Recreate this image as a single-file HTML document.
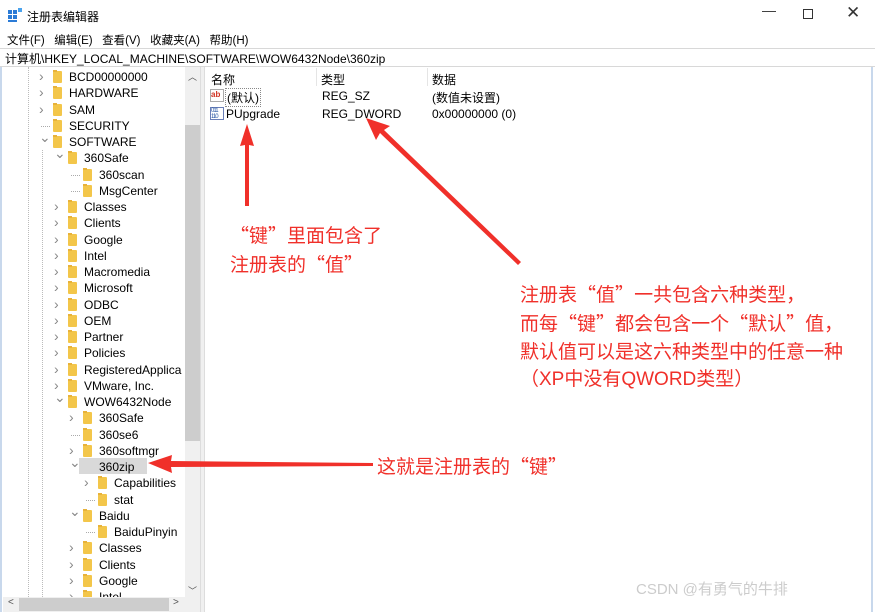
<!DOCTYPE html>
<html><head><meta charset="utf-8"><style>
*{margin:0;padding:0;box-sizing:border-box}
body{width:875px;height:612px;overflow:hidden;background:#fff;font-family:"Liberation Sans","Noto Sans CJK SC",sans-serif;font-size:12px;color:#000;position:relative}
.a{position:absolute;white-space:nowrap}
.row{position:absolute;height:16px;line-height:16px;font-size:12px}
.fd{position:absolute;width:9px;height:12px;background:#f3c64a;border-radius:1px;top:2px}
.fd:before{content:"";position:absolute;left:0;top:-1px;width:4px;height:2px;background:#e8b23a}
.ch{position:absolute;top:0;color:#888;font-size:10px}
.red{color:#f0302a;font-size:19px;font-family:"Liberation Sans","Noto Sans CJK SC",sans-serif}
.q{font-family:"Noto Sans CJK SC",sans-serif}
</style></head><body>
<div class="a" style="left:0;top:0;width:875px;height:30px;background:#fff"></div>
<svg class="a" style="left:8px;top:8px" width="14" height="14"><rect x="0" y="2" width="4" height="4" fill="#2b7bd6"/><rect x="5" y="2" width="4" height="4" fill="#2b7bd6"/><rect x="0" y="7" width="4" height="4" fill="#2b7bd6"/><rect x="5" y="7" width="4" height="4" fill="#2b7bd6"/><rect x="0" y="12" width="9" height="2" fill="#2b7bd6"/><rect x="10" y="0" width="4" height="4" fill="#4aa3ee"/></svg>
<div class="a" style="left:27px;top:8px;font-size:12px">注册表编辑器</div>
<div class="a" style="left:762px;top:2px;font-size:14px;color:#333">—</div>
<div class="a" style="left:803px;top:9px;width:10px;height:10px;border:1px solid #333"></div>
<div class="a" style="left:846px;top:3px;font-size:17px;color:#333">✕</div>
<div class="a" style="left:7px;top:32px;font-size:11.5px">文件(F)&nbsp;&nbsp;&nbsp;编辑(E)&nbsp;&nbsp;&nbsp;查看(V)&nbsp;&nbsp;&nbsp;收藏夹(A)&nbsp;&nbsp;&nbsp;帮助(H)</div>
<div class="a" style="left:0;top:48px;width:875px;height:19px;border-top:1px solid #d8d8d8;border-bottom:1px solid #d8d8d8"></div>
<div class="a" style="left:5px;top:50px;font-size:12px">计算机\HKEY_LOCAL_MACHINE\SOFTWARE\WOW6432Node\360zip</div>
<div class="a" style="left:0;top:67px;width:2px;height:545px;background:#c8d8ec"></div>
<div class="a" style="left:185px;top:67px;width:15px;height:530px;background:#f0f0f0"></div>
<div class="a" style="left:185px;top:125px;width:15px;height:316px;background:#cdcdcd"></div>
<div class="a" style="left:188px;top:70px;font-size:9px;color:#555">︿</div>
<div class="a" style="left:188px;top:584px;font-size:9px;color:#555">﹀</div>
<div class="a" style="left:3px;top:597px;width:197px;height:15px;background:#f0f0f0"></div>
<div class="a" style="left:19px;top:598px;width:150px;height:13px;background:#cdcdcd"></div>
<div class="a" style="left:8px;top:597px;font-size:10px;color:#555">&lt;</div>
<div class="a" style="left:173px;top:597px;font-size:10px;color:#555">&gt;</div>
<div class="a" style="left:200px;top:67px;width:5px;height:545px;background:#f0f0f0;border-left:1px solid #ddd;border-right:1px solid #ddd"></div>
<div class="a" style="left:28px;top:67px;height:530px;border-left:1px dotted #bbb"></div>
<div class="a" style="left:42px;top:150px;height:447px;border-left:1px dotted #bbb"></div>
<div id="tree"></div>
<div class="a" style="left:79px;top:458px;width:68px;height:16px;background:#d9d9d9"></div>
<script>
var items=[[1,">","BCD00000000"],[1,">","HARDWARE"],[1,">","SAM"],[1,"-","SECURITY"],[1,"v","SOFTWARE"],[2,"v","360Safe"],[3,"-","360scan"],[3,"-","MsgCenter"],[2,">","Classes"],[2,">","Clients"],[2,">","Google"],[2,">","Intel"],[2,">","Macromedia"],[2,">","Microsoft"],[2,">","ODBC"],[2,">","OEM"],[2,">","Partner"],[2,">","Policies"],[2,">","RegisteredApplica"],[2,">","VMware, Inc."],[2,"v","WOW6432Node"],[3,">","360Safe"],[3,"-","360se6"],[3,">","360softmgr"],[3,"v","360zip"],[4,">","Capabilities"],[4,"-","stat"],[3,"v","Baidu"],[4,"-","BaiduPinyin"],[3,">","Classes"],[3,">","Clients"],[3,">","Google"],[3,">","Intel"]];
var h="";items.forEach(function(it,i){var t=69+i*16.25;if(t>590)return;var x=42+(it[0]-1)*15;var c=it[1]==">"?"›":it[1]=="v"?"⌄":"";
h+='<div class="row" style="top:'+t+'px;left:0;width:185px;overflow:hidden;height:'+Math.min(16,597-t)+'px">'+(c?'<span class="ch" style="left:'+(x-3)+'px;font-size:'+(c=="⌄"?"14px;top:-5px":"14px;top:-1px")+'">'+c+'</span>':'<span class="a" style="left:'+(x-1)+'px;top:8px;width:9px;border-top:1px dotted #aaa"></span>')+'<span class="fd" style="left:'+(x+11)+'px"></span><span class="a" style="left:'+(x+27)+'px;top:0'+(i==24?';z-index:2':'')+'">'+it[2]+'</span></div>';});
document.getElementById("tree").innerHTML=h;
</script>
<div class="a" style="left:316px;top:68px;height:18px;border-left:1px solid #e5e5e5"></div>
<div class="a" style="left:427px;top:68px;height:18px;border-left:1px solid #e5e5e5"></div>
<div class="a" style="left:211px;top:71px">名称</div>
<div class="a" style="left:321px;top:71px">类型</div>
<div class="a" style="left:432px;top:71px">数据</div>
<div class="a" style="left:210px;top:89px;width:14px;height:13px;background:#fff;border:1px solid #aaa;font-size:8px;color:#d03020;font-weight:bold;line-height:10px">ab</div>
<div class="a" style="left:225px;top:88px;border:1px dotted #888;padding:0 1px">(默认)</div>
<div class="a" style="left:322px;top:89px">REG_SZ</div>
<div class="a" style="left:432px;top:89px">(数值未设置)</div>
<div class="a" style="left:210px;top:107px;width:14px;height:13px;border:1px solid #6a7fb8;font-size:6px;color:#2050a0;line-height:6px;letter-spacing:-1px">011<br>110</div>
<div class="a" style="left:226px;top:107px">PUpgrade</div>
<div class="a" style="left:322px;top:107px">REG_DWORD</div>
<div class="a" style="left:432px;top:107px">0x00000000 (0)</div>
<div class="a" style="left:871px;top:67px;width:2px;height:545px;background:#c8d8ec"></div>
<svg class="a" style="left:0;top:0" width="875" height="612">
<polygon points="247,124 254,146 249,145 249,206 245,206 245,145 240,146" fill="#f0302a"/>
<polygon points="366,118 390,126 384,130 521,262 518,265 380,133 376,140" fill="#f0302a"/>
<polygon points="148,463 172,455 171,461 373,463 373,466 171,467 172,473" fill="#f0302a"/>
</svg>
<div class="a red" style="left:230px;top:221px;line-height:27px"><span class="q">“</span>键<span class="q">”</span>里面包含了<br>注册表的<span class="q">“</span>值<span class="q">”</span></div>
<div class="a red" style="left:520px;top:280px;line-height:27.3px">注册表<span class="q">“</span>值<span class="q">”</span>一共包含六种类型，<br>而每<span class="q">“</span>键<span class="q">”</span>都会包含一个<span class="q">“</span>默认<span class="q">”</span>值，<br>默认值可以是这六种类型中的任意一种<br>（XP中没有QWORD类型）</div>
<div class="a red" style="left:377px;top:452px">这就是注册表的<span class="q">“</span>键<span class="q">”</span></div>
<div class="a" style="left:636px;top:578px;font-size:15px;color:#ccc">CSDN @有勇气的牛排</div>
</body></html>
